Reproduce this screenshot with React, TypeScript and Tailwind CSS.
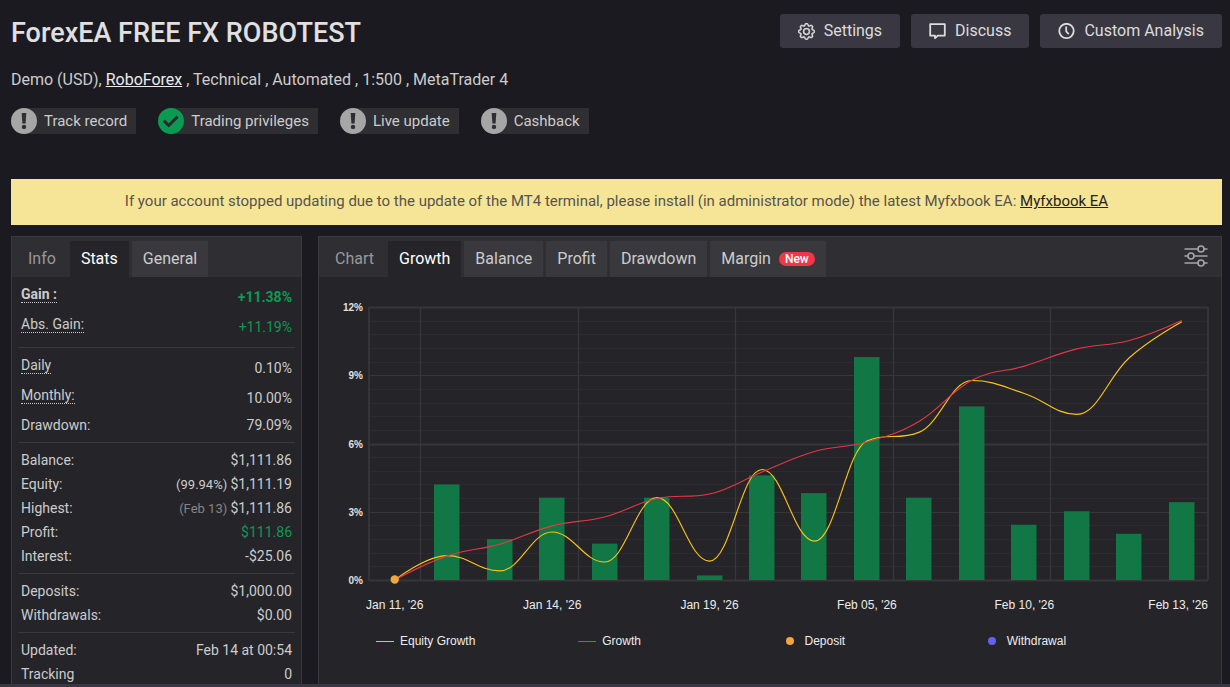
import type { ReactNode } from "react";
import { BsGear } from "react-icons/bs";

const BADGES = [
  { label: "Track record", ok: false },
  { label: "Trading privileges", ok: true },
  { label: "Live update", ok: false },
  { label: "Cashback", ok: false },
];

type Stat = {
  label: string;
  value: string;
  note?: string;
  noteMuted?: boolean;
  hint?: boolean;
  bold?: boolean;
  green?: boolean;
};

const STATS: Stat[][] = [
  [
    { label: "Gain :", value: "+11.38%", hint: true, bold: true, green: true },
    { label: "Abs. Gain:", value: "+11.19%", hint: true, green: true },
  ],
  [
    { label: "Daily", value: "0.10%", hint: true },
    { label: "Monthly:", value: "10.00%", hint: true },
    { label: "Drawdown:", value: "79.09%" },
  ],
  [
    { label: "Balance:", value: "$1,111.86" },
    { label: "Equity:", value: "$1,111.19", note: "(99.94%)" },
    { label: "Highest:", value: "$1,111.86", note: "(Feb 13)", noteMuted: true },
    { label: "Profit:", value: "$111.86", green: true },
    { label: "Interest:", value: "-$25.06" },
  ],
  [
    { label: "Deposits:", value: "$1,000.00" },
    { label: "Withdrawals:", value: "$0.00" },
  ],
  [
    { label: "Updated:", value: "Feb 14 at 00:54" },
    { label: "Tracking", value: "0" },
  ],
];

// all series are in percent, one entry per trading day
const BARS = [0, 4.2, 1.8, 3.62, 1.6, 3.62, 0.2, 4.6, 3.82, 9.8, 3.62, 7.63, 2.43, 3.02, 2.03, 3.42];
const EQUITY = [0, 1.07, 0.4, 2.11, 0.79, 3.62, 0.83, 4.86, 1.71, 6.11, 6.5, 8.77, 8.2, 7.28, 9.77, 11.35];
const GROWTH = [0, 1.06, 1.57, 2.38, 2.77, 3.58, 3.78, 4.75, 5.65, 6.07, 6.98, 8.78, 9.4, 10.16, 10.53, 11.41];

const DATES = [
  { at: 0, text: "Jan 11, '26" },
  { at: 3, text: "Jan 14, '26" },
  { at: 6, text: "Jan 19, '26" },
  { at: 9, text: "Feb 05, '26" },
  { at: 12, text: "Feb 10, '26" },
];

const LEFT = 49.5;
const RIGHT = 889;
const TOP = 30;
const BOTTOM = 303;
const STEP = (RIGHT - LEFT) / BARS.length;

const xAt = (i: number) => LEFT + STEP * (i + 0.5);
const yAt = (v: number) => BOTTOM - (v / 12) * (BOTTOM - TOP);

function spline(values: number[]) {
  const pts = values.map((v, i) => ({ x: xAt(i), y: yAt(v) }));
  let out = pts[0];
  let d = `M${pts[0].x} ${pts[0].y}`;
  for (let i = 1; i < pts.length; i++) {
    const prev = pts[i - 1];
    const cur = pts[i];
    const next = pts[i + 1];
    let left = cur;
    let right = cur;
    if (next) {
      const lx = (1.5 * cur.x + prev.x) / 2.5;
      const rx = (1.5 * cur.x + next.x) / 2.5;
      let ly = (1.5 * cur.y + prev.y) / 2.5;
      let ry = (1.5 * cur.y + next.y) / 2.5;
      const fix = ((ry - ly) * (rx - cur.x)) / (rx - lx) + cur.y - ry;
      ly += fix;
      ry += fix;
      // keep the curve from overshooting its neighbours
      if (ly > Math.max(prev.y, cur.y)) {
        ly = Math.max(prev.y, cur.y);
        ry = 2 * cur.y - ly;
      } else if (ly < Math.min(prev.y, cur.y)) {
        ly = Math.min(prev.y, cur.y);
        ry = 2 * cur.y - ly;
      }
      if (ry > Math.max(next.y, cur.y)) {
        ry = Math.max(next.y, cur.y);
        ly = 2 * cur.y - ry;
      } else if (ry < Math.min(next.y, cur.y)) {
        ry = Math.min(next.y, cur.y);
        ly = 2 * cur.y - ry;
      }
      left = { x: lx, y: ly };
      right = { x: rx, y: ry };
    }
    d += `C${out.x} ${out.y} ${left.x} ${left.y} ${cur.x} ${cur.y}`;
    out = right;
  }
  return d;
}

function BadgeIcon({ ok }: { ok: boolean }) {
  return (
    <svg viewBox="0 0 26 26" className="size-[26px] shrink-0" aria-hidden="true">
      <circle cx="13" cy="13" r="13" fill={ok ? "#0b9a51" : "#a6a6a6"} />
      {ok ? (
        <path d="M5.8 12.6l4.9 4.9 8.9-8.9" fill="none" stroke="#2a292e" strokeWidth="3" />
      ) : (
        <>
          <path d="M10.7 5h4.6l-.7 10.6h-3.2z" fill="#2f2e33" />
          <circle cx="13" cy="18.9" r="2.2" fill="#2f2e33" />
        </>
      )}
    </svg>
  );
}

function DiscussIcon() {
  return (
    <svg viewBox="0 0 17 17" className="size-[17px]" fill="none" stroke="currentColor" strokeWidth="1.8" aria-hidden="true">
      <path d="M1.2 1.2h14.6v11.4H8.8l-2.8 2.6v-2.6H1.2z" strokeLinejoin="round" />
    </svg>
  );
}

function ClockIcon() {
  return (
    <svg viewBox="0 0 17 17" className="size-[17px]" fill="none" stroke="currentColor" strokeWidth="1.8" aria-hidden="true">
      <circle cx="8.5" cy="8" r="7.2" />
      <path d="M8.2 3.6v4.9l2.6 2.6" />
    </svg>
  );
}

function SlidersIcon() {
  return (
    <svg viewBox="0 0 24 24" className="size-6" fill="none" stroke="currentColor" strokeWidth="1.6" aria-hidden="true">
      <path d="M.5 5H14M20 5h3.5M.5 12H4M10 12h13.5M.5 19H14M20 19h3.5" />
      <circle cx="17" cy="5" r="3" />
      <circle cx="7" cy="12" r="3" />
      <circle cx="17" cy="19" r="3" />
    </svg>
  );
}

function ActionButton({ icon, children }: { icon: ReactNode; children: ReactNode }) {
  return (
    <button type="button" className="flex h-[34px] items-center gap-[9px] rounded-[3px] bg-[#393842] px-[18px] text-base text-[#dcdcdc]">
      {icon}
      {children}
    </button>
  );
}

function Tab({ kind = "idle", children }: { kind?: "plain" | "active" | "idle"; children: ReactNode }) {
  const look = {
    plain: "text-[#999999]",
    active: "bg-[#252429] text-white",
    idle: "bg-[#39383d] text-[#cccccc]",
  };
  return (
    <button type="button" className={`flex h-9 items-center gap-2 px-[11px] text-base ${look[kind]}`}>
      {children}
    </button>
  );
}

function GrowthChart() {
  return (
    <svg viewBox="0 0 902 348" className="block w-full font-['Liberation_Sans',sans-serif]" role="img" aria-label="Growth">
      {Array.from({ length: 21 }, (_, i) => (
        <line
          key={i}
          x1={LEFT}
          x2={RIGHT}
          y1={Math.round(yAt(i * 0.6)) + 0.5}
          y2={Math.round(yAt(i * 0.6)) + 0.5}
          stroke={i % 5 === 0 ? "#37363b" : "#2c2b30"}
          strokeWidth={i % 10 === 0 ? 1.8 : 1}
        />
      ))}
      {[1, 4, 7, 10, 13].map((i) => (
        <line
          key={i}
          x1={Math.floor(LEFT + STEP * i) + 0.5}
          x2={Math.floor(LEFT + STEP * i) + 0.5}
          y1={TOP}
          y2={BOTTOM}
          stroke="#37363b"
          strokeWidth="1.4"
        />
      ))}
      <path d={`M50 ${TOP}V${BOTTOM}M${RIGHT} ${TOP}V${BOTTOM}`} stroke="#37363b" strokeWidth="1.8" />

      {BARS.map((v, i) => (
        <rect key={i} x={Math.floor(xAt(i) - 12.5)} y={yAt(v)} width="25.5" height={BOTTOM - yAt(v)} fill="#117745" />
      ))}
      <path d={spline(EQUITY)} fill="none" stroke="#fcc419" strokeWidth="1.1" />
      <path d={spline(GROWTH)} fill="none" stroke="#e63745" strokeWidth="1.1" />
      <circle cx={xAt(0)} cy={BOTTOM - 0.5} r="4.2" fill="#f2a63d" />

      {[0, 3, 6, 9, 12].map((v) => (
        <text key={v} x="44" y={yAt(v) + 4} textAnchor="end" fontSize="10" fontWeight="700" fill="#e0e0e0">
          {v}%
        </text>
      ))}
      {DATES.map((d) => (
        <text key={d.at} x={xAt(d.at)} y="332" textAnchor="middle" fontSize="12" fill="#ececec">
          {d.text}
        </text>
      ))}
      <text x="889" y="332" textAnchor="end" fontSize="12" fill="#ececec">
        Feb 13, '26
      </text>
    </svg>
  );
}

function LegendItem({ symbol, children }: { symbol: ReactNode; children: ReactNode }) {
  return (
    <li className="flex items-center gap-1.5">
      <span className="flex w-[18px] justify-center">{symbol}</span>
      {children}
    </li>
  );
}

export default function App() {
  return (
    <div className="h-screen overflow-hidden bg-[#1b1a20] pr-2 pl-[11px] font-[Roboto,sans-serif] text-[#cccccc]">
      <header className="flex items-start justify-between pt-3.5">
        <h1 className="pt-0.5 text-[27px] leading-[34px] font-medium text-[#e0e0e0]">ForexEA FREE FX ROBOTEST</h1>
        <div className="flex gap-[11px]">
          <ActionButton icon={<BsGear size={17} stroke="currentColor" strokeWidth={0.5} />}>Settings</ActionButton>
          <ActionButton icon={<DiscussIcon />}>Discuss</ActionButton>
          <ActionButton icon={<ClockIcon />}>Custom Analysis</ActionButton>
        </div>
      </header>

      <p className="mt-[18px] text-base leading-6">
        Demo (USD),{" "}
        <a href="#" className="text-[#ececec] underline">
          RoboForex
        </a>{" "}
        , Technical , Automated , 1:500 , MetaTrader 4
      </p>

      <ul className="mt-4 flex gap-[22px]">
        {BADGES.map((b) => (
          <li key={b.label} className="flex h-[26px] items-center gap-[7px] rounded-l-full rounded-r-xs bg-[#2f2e33] pr-[9px] text-[15px]">
            <BadgeIcon ok={b.ok} />
            {b.label}
          </li>
        ))}
      </ul>

      <div className="mt-[45px] bg-[#f6e596] pt-3 pb-3.5 text-center text-[15px] leading-5 text-[#56544c]">
        If your account stopped updating due to the update of the MT4 terminal, please install (in administrator mode)
        the latest Myfxbook EA:{" "}
        <a href="#" className="text-[#222222] underline">
          Myfxbook EA
        </a>
      </div>

      <main className="mt-[11px] flex gap-4">
        <section className="w-[291px] shrink-0 border border-[#3a393e] bg-[#252429]">
          <nav className="flex gap-[3px] bg-[#2f2e33] pt-1 pl-[5px]">
            <Tab kind="plain">Info</Tab>
            <Tab kind="active">Stats</Tab>
            <Tab>General</Tab>
          </nav>
          <div className="mx-1.5 divide-y divide-[#3a393e] text-sm">
            {STATS.map((group) => (
              <dl key={group[0].label} className="px-[3px] py-[5px]">
                {group.map((s) => (
                  <div
                    key={s.label}
                    className={`flex items-center justify-between ${s.hint ? "h-[30px]" : "h-6"} ${s.bold ? "font-bold" : ""}`}
                  >
                    <dt className={s.hint ? "mb-1.5 border-b border-dotted border-[#cccccc] leading-4" : ""}>{s.label}</dt>
                    <dd className={s.green ? "text-[#0b9a51]" : ""}>
                      {s.note && <span className={`text-[13px] ${s.noteMuted ? "text-[#858585]" : ""}`}>{s.note} </span>}
                      {s.value}
                    </dd>
                  </div>
                ))}
              </dl>
            ))}
          </div>
        </section>

        <section className="min-w-0 flex-1 border border-[#3a393e] bg-[#252429]">
          <div className="flex items-center justify-between bg-[#2f2e33] pt-1 pr-[13px] pl-[5px]">
            <nav className="flex gap-[3px]">
              <Tab kind="plain">Chart</Tab>
              <Tab kind="active">Growth</Tab>
              <Tab>Balance</Tab>
              <Tab>Profit</Tab>
              <Tab>Drawdown</Tab>
              <Tab>
                Margin
                <span className="rounded-full bg-[#f23645] px-1.5 text-xs leading-[14px] font-medium text-white">New</span>
              </Tab>
            </nav>
            <button type="button" aria-label="Chart options" className="mb-1.5 text-[#a6a6a6]">
              <SlidersIcon />
            </button>
          </div>
          <GrowthChart />
          <ul className="mt-2 grid grid-cols-4 pr-9 pl-[57px] font-['Liberation_Sans',sans-serif] text-xs text-[#ececec]">
            <LegendItem symbol={<span className="w-full border-t border-[#fcc419]" />}>Equity Growth</LegendItem>
            <LegendItem symbol={<span className="w-full border-t border-[#e63745]" />}>Growth</LegendItem>
            <LegendItem symbol={<span className="size-2 rounded-full bg-[#f2a63d]" />}>Deposit</LegendItem>
            <LegendItem symbol={<span className="size-2 rounded-full bg-[#6461f5]" />}>Withdrawal</LegendItem>
          </ul>
        </section>
      </main>

      <div className="fixed inset-x-0 bottom-0 h-[3px] bg-[#393842]" />
    </div>
  );
}
